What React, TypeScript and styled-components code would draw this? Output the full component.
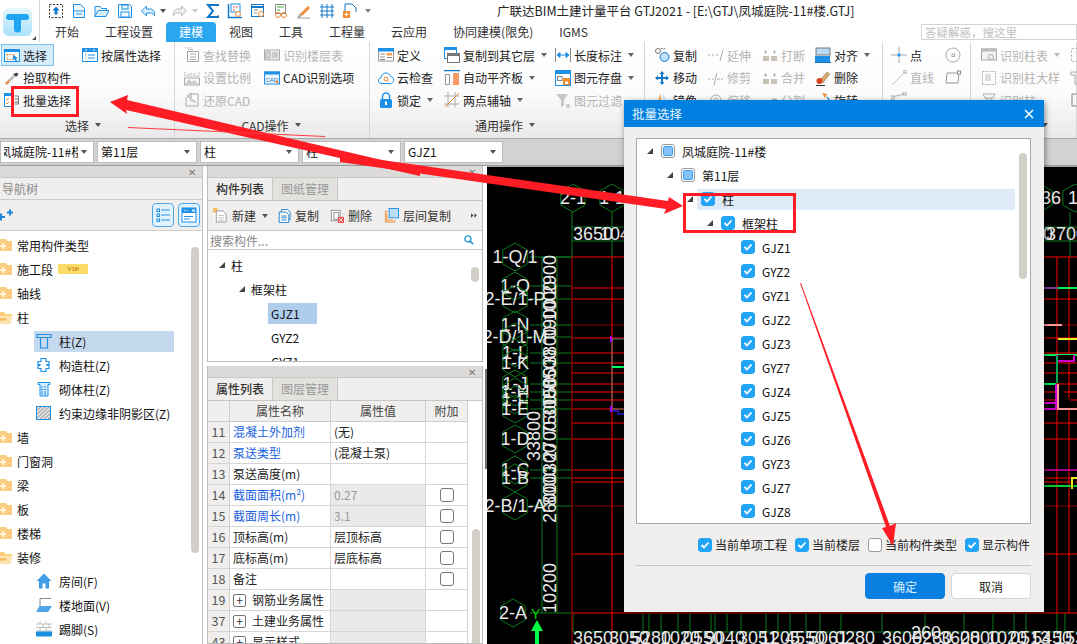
import React from 'react';
import styled, { createGlobalStyle } from 'styled-components';

const GlobalStyle = createGlobalStyle`
  html, body { margin: 0; padding: 0; background: #fff; }
  body { font-family: "Noto Sans CJK SC", "Liberation Sans", sans-serif; font-size: 12px; color: #111; }
  * { box-sizing: border-box; }
`;

const B = '#1e90e6', O = '#f28a2e', G = '#a9a9a9';

const icons: Record<string, React.ReactNode> = {
  upload: <><rect x="1.5" y="1.5" width="13" height="13" stroke="#333" strokeDasharray="2 1.5" /><path d="M8 3.5l3.5 4H9.5v4h-3v-4H4.5z" fill="#1478c8" /></>,
  doc: <><path d="M2.5 1.5h7l4 4v9h-11z" fill="#eef7fe" stroke={B} /><path d="M2.5 8h11M5 11h6" stroke={B} /></>,
  folder: <><path d="M1 13.5V3.5h5l1.5 2h5v2" stroke={B} fill="#eef7fe" /><path d="M1 13.5l3-6h11l-3 6z" fill="#d8eefc" stroke={B} /></>,
  save: <><path d="M1.5 1.5h11l2 2v11h-13z" fill="#eef7fe" stroke={B} /><rect x="5" y="2" width="6" height="4" stroke={B} /><rect x="4" y="9" width="8" height="5" fill="#fff" stroke={B} /></>,
  undo: <path d="M6.5 3L1.5 8l5 5v-3h4c2 0 3.500 1 4 3 .5-4-1-7-4-7h-4z" fill="#d8eefc" stroke={B} />,
  redo: <path d="M9.500 3l5 5-5 5v-3h-4c-2 0-3.500 1-4 3-.5-4 1-7 4-7h4z" fill="#eee" stroke="#bbb" />,
  sigma: <path d="M13 3V2H3l5 6-5 6h10v-1.500" stroke="#1478c8" strokeWidth="2" />,
  calc1: <><path d="M1.500 1v13.500H15" stroke="#1478c8" strokeWidth="1.500" /><rect x="4" y="1" width="9" height="8" fill="#fff" stroke={B} /><path d="M6 4h2M9 4h2M6 7h2" stroke="#e55" /><circle cx="11" cy="11" r="2.500" stroke={O} fill="#fff" /></>,
  calc2: <><rect x="1.500" y="1.500" width="12" height="12" fill="#fff" stroke="#1478c8" /><path d="M1.500 4h12" stroke="#1478c8" strokeWidth="2" /><path d="M4 7h4M4 10h3" stroke="#888" /><circle cx="11" cy="11" r="2.500" stroke={O} fill="#fff" /></>,
  calc3: <><rect x="2.500" y="1.500" width="10" height="9" fill="#fff" stroke="#888" /><path d="M4 4h7M4 7h3" stroke="#4a4" /><circle cx="5" cy="12" r="2.500" stroke={O} /><circle cx="11" cy="12" r="2.500" stroke={O} /></>,
  pen: <><path d="M4 11l8-8 2 2-8 8z" fill={O} /><path d="M4 11l-2 3 3-1zM1 15h13" stroke="#999" /></>,
  grid: <path d="M1 4h14M1 8h14M1 12h14M3 1v14M8 1v14M13 1v14" stroke="#1478c8" />,
  pagePlus: <><path d="M3 1h7l4 4v4M3 1v8" stroke="#1478c8" fill="none" /><rect x="1" y="8" width="7" height="7" fill={O} /><path d="M4.500 9.500v4M2.500 11.500h4" stroke="#fff" /></>,
  select: <><rect x=".5" y="2.500" width="15" height="12" fill="#f5fbff" stroke={B} /><rect x="0" y="2" width="16" height="3" fill={B} /><rect x="3" y="7.500" width="7" height="5" stroke={O} strokeDasharray="1.500 1" /><path d="M9 8l5 3-2 .5 1 2.500-1.500.5-1-2.500-1.500 1z" fill={B} /></>,
  attr: <><rect x=".5" y="1.500" width="15" height="13" fill="#fff" stroke={B} /><rect x="0" y="1" width="16" height="4" fill={B} /><path d="M3 8h1M6 8h7M3 11h1M6 11h7" stroke={B} /><path d="M3 3h2M11 3h2" stroke="#fff" /></>,
  pick: <><path d="M2 14l8-8" stroke="#bbb" strokeWidth="2.500" /><path d="M2 14l3-3" stroke={O} strokeWidth="2" /><path d="M9 4l3 3 2-2c1-1-1-3-2-2z" fill="#444" /></>,
  batch: <><rect x=".5" y="1.500" width="7" height="13" fill="#fff" stroke={B} /><rect x="0" y="1" width="8" height="3" fill={B} /><path d="M2 7l1 1 2-2M2 11l1 1 2-2" stroke={O} /><path d="M10.500 4h4v8h-4M10.500 7h4M10.500 10h4" stroke="#777" /></>,
  find: <><rect x="3.500" y="4.500" width="11" height="10" stroke={G} /><path d="M6 7h6M6 10h6M6 12.500h6" stroke={G} /><path d="M1 1h7v3M4 2.500h6" stroke={G} strokeDasharray="1 1" /></>,
  floorTable: <><rect x=".5" y="3" width="15" height="10" fill="#eee" stroke={G} /><rect x="2" y="5" width="4" height="6" fill="#ddd" stroke={G} /><path d="M8 6h6M8 8h6M8 10h6" stroke={G} /></>,
  scale: <><path d="M1 14l4-5 3 3 2-2 5 4z" fill="#ccc" /><path d="M1 2v4h14V2M4 4h8" stroke={G} strokeDasharray="1.500 1" /><rect x=".5" y="8" width="15" height="7" stroke={G} /></>,
  cadOpt: <><rect x=".5" y="2" width="15" height="12" fill="#eaf5fd" stroke={B} /><rect x="0" y="1.500" width="16" height="3" fill={B} /><text x="1.500" y="12" fontSize="6" fontFamily="Liberation Sans" fill="#1478c8">CAD</text><path d="M12 10l3 2-3 2z" fill={O} /></>,
  restore: <><path d="M2 5v9h12V2H6" stroke={G} /><path d="M7 1L3 4l4 3zM6 9c2-2 5-1 5 2" stroke={G} fill="#ddd" /></>,
  define: <><rect x=".5" y="1.500" width="15" height="12.500" fill="#fff" stroke="#999" /><rect x="0" y="1" width="16" height="3.500" fill={B} /><rect x="8.500" y="6" width="5.500" height="2.500" fill="#f5a04a" /><path d="M2 7h5M2 10h5M9 10.500h5M2 12.500h5" stroke="#888" /></>,
  cloud: <><path d="M4 13.500C1 13.500 0 11.500.5 10 1 8.500 2 8 3 8c0-3 2-5 5-5 2.500 0 4 1.500 4.500 3.500 2 0 3.500 1.500 3 4-.3 2-1.500 3-3 3z" fill="#fff" stroke={B} /><circle cx="8" cy="9" r="2" stroke={O} /><path d="M9.500 10.500l1.500 1.500" stroke={O} /></>,
  lock: <><rect x="2" y="7" width="12" height="9" rx="1.500" fill={B} /><path d="M4.500 7V4.500a3.500 3.500 0 017 0V7" stroke={B} strokeWidth="1.500" /><rect x="7" y="9.500" width="2" height="3.500" fill="#fff" /></>,
  copyFloor: <><rect x=".5" y=".5" width="12" height="11" fill="#fff" stroke={B} /><rect x="0" y="0" width="13" height="3" fill={B} /><rect x="3.500" y="6.500" width="12" height="9" fill="#fff" stroke="#777" /><rect x="3" y="6" width="13" height="3" fill="#777" /></>,
  autoAlign: <><path d="M0 .5h16" stroke="#1478c8" strokeWidth="1.500" /><rect x="1.500" y="4.500" width="4" height="10" fill="#fff" stroke="#999" /><rect x="9" y="3" width="6" height="12" fill="#f79a66" /></>,
  twoPoint: <><path d="M0 4h15M0 12h15M4 0v15M11 0v15" stroke="#aaa" /><path d="M1 15L15 1" stroke={O} /></>,
  length: <><path d="M.5 1v14M15.500 1v14" stroke="#888" /><path d="M2 8h12M2 8l3-2.500v5zM14 8l-3-2.500v5z" stroke={B} fill={B} /></>,
  saveEl: <><rect x=".5" y=".5" width="15" height="15" fill="#fff" stroke={B} /><rect x="0" y="0" width="16" height="4" fill={B} /><rect x="2.500" y="6.500" width="4.500" height="4" stroke="#888" /><rect x="8" y="8" width="7" height="7" fill={O} /><rect x="10" y="11.500" width="3" height="2.500" fill="#fff" /></>,
  filter: <><path d="M1 2h12L9 8v6l-3 1V8z" fill="#c9c9c9" /><path d="M11 13h4M11 15h4" stroke={G} /></>,
  copy: <><circle cx="4" cy="4" r="2.500" stroke="#777" /><path d="M7 1.500h5" stroke="#777" strokeDasharray="1.500 1" /><circle cx="10.500" cy="10" r="4.500" fill="#bfe0f8" stroke="#1478c8" /></>,
  extend: <path d="M0 8h2M4 8h2M8 8h2M12 14l3-11" stroke={G} />,
  breakI: <><rect x="1" y="9" width="6" height="5" fill="#c9c3b6" /><rect x="9" y="9" width="6" height="5" fill="#c9c3b6" /><path d="M2 5h3M3.500 3.500v3M11 5h3M12.500 3.500v3" stroke={G} /></>,
  alignI: <><rect x="1" y="1" width="14" height="7" fill="#b8dcf8" stroke="#777" /><rect x="0" y="9" width="15" height="6" fill={B} /><path d="M0 15.500h16" stroke="#1478c8" /></>,
  move: <path d="M8 1l2.500 3H9v3h3V5.500L15 8l-3 2.500V9H9v3h1.500L8 15l-2.500-3H7V9H4v1.500L1 8l3-2.500V7h3V4H5.500z" fill="#1478c8" />,
  trim: <path d="M0 9h2M4 9h2M9 9h3M13 9h2M6 15L9 3" stroke={G} />,
  del: <><path d="M5 10l7-8 3 2-7 9z" fill="#d9a868" stroke="#876" strokeWidth=".5" /><circle cx="4.500" cy="11" r="3" fill="#d8431a" /><path d="M1 15.500h9" stroke="#333" /></>,
  mirror: <><path d="M7 1L2 14h5z" fill="#f5a04a" /><path d="M9 1l5 13H9z" fill="#c6e2f8" /></>,
  offset: <path d="M3 15V8a5 5 0 0110 0v7M6 15V8a2 2 0 014 0v7" stroke={G} />,
  split: <path d="M1 14l11-7 3 1M1 14h14" stroke={G} strokeWidth="1.500" />,
  rotate: <><path d="M3 9a5.500 5.500 0 109-4" stroke={B} strokeWidth="1.500" /><path d="M7 1l5 1-2 4z" fill={O} /></>,
  point: <><path d="M0 8h6M10 8h6M8 0v6M8 10v6" stroke="#aaa" /><rect x="6.500" y="6.500" width="3" height="3" fill={B} /></>,
  circleI: <><circle cx="8" cy="8" r="7" stroke="#a8a8a8" /><rect x="7" y="7" width="2.500" height="2.500" stroke="#a8a8a8" /></>,
  lineI: <><path d="M1 15L15 1" stroke="#c8c8c8" /><rect x="13" y="0" width="3" height="3" fill="#fff" stroke="#aaa" /></>,
  rectI: <><path d="M2 3h12l-1 10H1z" stroke="#999" /><rect x="12.500" y="1" width="3" height="3" fill="#fff" stroke="#888" /></>,
  polyI: <><path d="M1 13V5l12-3" stroke={G} /><rect x="12" y="0" width="3" height="3" fill="#fff" stroke={G} /><rect x="0" y="4" width="3" height="3" fill="#fff" stroke={G} /></>,
  colTable: <><rect x=".5" y="2" width="15" height="11" fill="#f3f3f3" stroke={G} /><rect x="0" y="1.500" width="16" height="3" fill="#bbb" /><circle cx="10" cy="10" r="2.500" stroke={G} /></>,
  colBig: <><rect x="1.500" y="1.500" width="13" height="13" stroke={G} strokeDasharray="1.500 1" /><rect x="4" y="4" width="6" height="7" fill="#ddd" /></>,
  colRec: <><path d="M2 2h12l-2 4H4zM6 6v7M10 6v7" stroke={G} /><circle cx="11" cy="12" r="2" stroke={G} /></>,
  dots: <rect x="1.500" y="1.500" width="13" height="13" stroke={G} strokeDasharray="2 2" />,
  tee: <path d="M1 2h14v3h-4v9H5V5H1z" stroke={G} />,
  bracket: <path d="M2 2v12M2 2h10M2 14h10" stroke={G} strokeWidth="1.500" />,
  list: <><rect x="2" y="2" width="2.500" height="2.500" stroke={B} /><rect x="2" y="7" width="2.500" height="2.500" stroke={B} /><rect x="2" y="12" width="2.500" height="2.500" stroke={B} /><path d="M6 3h9M6 8h9M6 13h9" stroke={B} /></>,
  panel: <><rect x="1" y="1" width="14" height="14" fill="#fff" stroke={B} /><rect x="1" y="1" width="14" height="5" fill={B} /><path d="M3 9.500h9M3 12h6" stroke={B} /><path d="M3 3.500h1M5.500 3.500h1M11 3h3l-1.500 2z" stroke="#fff" /></>,
  column: <path d="M1 1.500h14v3h-3.500V15h-7V4.500H1zM4.500 4.500h7" stroke={B} fill="none" strokeWidth="1.200" />,
  construct: <path d="M5 1.500h5v3h3v3h-2v1h2v3h-3v3H5v-3H2v-3h2v-1H2v-3h3z" stroke={B} fill="#fff" strokeWidth="1.200" />,
  masonry: <><path d="M2 1.500h12v2h-2V15H4V3.500H2z" stroke={B} fill="#d7ebfb" /><path d="M5 6h6M5 8.500h6M5 11h6M5 13h6" stroke={B} strokeDasharray="2 1" /></>,
  hatch: <><rect x=".5" y="1.500" width="14" height="13" fill="#ddd" stroke={B} /><path d="M1 5l4-3M1 9l8-7M1 13l12-11M4 14l10-9M8 14l6-5M12 14l2-2" stroke="#999" /></>,
  house: <path d="M8 .5L.5 8H3v7.500h3.500v-5h3v5H13V8h2.500z" fill="#3f9ee8" />,
  floor: <><path d="M4 9V1.500h11" stroke="#888" /><path d="M0 15l3.500-6H16l-4 6z" fill="#4ea4e6" /></>,
  skirt: <><path d="M0 3h16M0 6.500h16M0 10h16M4 0v3M10 0v3M7 3v3.500M13 3v3.500M4 6.500V10M10 6.500V10" stroke="#bbb" strokeWidth="1" /><rect x="0" y="10.500" width="16" height="5" fill="#1e8fe0" /></>,
  add: <><rect x="1" y="1.500" width="9" height="11" fill="#fbfbfb" /><rect x="0" y="0" width="5" height="5" fill="#f9c06a" /><path d="M3.500 3h7l3.500 3.500V15h-10.500z" fill="#fff" stroke="#999" /><path d="M5.500 8h6M5.500 10.500h6M5.500 13h6" stroke="#bbb" /></>,
  copyDoc: <><path d="M5 .5h7l3 3V12H5z" fill="#fff" stroke="#1478c8" /><path d="M2.500 3.500h8l3 3v9h-11z" fill="#fff" stroke="#1478c8" /><path d="M5 8h6M5 10h6M5 12.500h6" stroke="#1478c8" /></>,
  delDoc: <><rect x="1.500" y="1.500" width="10" height="12" fill="#fff" stroke="#888" /><rect x="4.500" y="4" width="5" height="8" fill="#fff" stroke="#888" /><rect x="9" y="9" width="7" height="7" fill="#ef5350" /><path d="M10.500 10.500l4 4M14.500 10.500l-4 4" stroke="#fff" /></>,
  layerCopy: <><path d="M4.500 3.500H1.500V15h10v-2M3 5.500V13h7" stroke={O} /><rect x="5.500" y=".5" width="10" height="10" fill="#bcdcf7" stroke={B} /></>,
  search: <><circle cx="6.500" cy="6.500" r="4" stroke="#1e98c8" strokeWidth="1.800" /><path d="M9.500 9.500l4 4" stroke="#1e98c8" strokeWidth="2" /></>,
  fw: <path d="M2 4l4 4-4 4zM8 4l4 4-4 4z" fill="#333" />,
};

const Svg = ({ n, w = 16, h = 16 }: { n: string; w?: number; h?: number }) => (
  <svg width={w} height={h} viewBox="0 0 16 16" fill="none" style={{ flex: 'none' }}>{icons[n]}</svg>
);

const Frame = styled.div`
  position: relative; width: 1077px; height: 644px; overflow: hidden; background: #f0efee;
  display: flex; flex-direction: column;
`;
/* ---------- header ---------- */
const Header = styled.header`display: flex; height: 42px; background: #fff;`;
const LogoCell = styled.div`
  position: relative; width: 40px; flex: none; border-right: 1px solid #d4d4d4; padding: 8px 0 0 3px;
  &::after { content: ''; position: absolute; right: 3px; bottom: 2px; border-left: 4px solid transparent; border-bottom: 4px solid #555; }
`;
const HeaderMain = styled.div`flex: 1; min-width: 0; display: flex; flex-direction: column;`;
const QuickBar = styled.div`height: 22px; display: flex; align-items: center; padding-left: 8px;`;
const QuickSlot = styled.span<{ $w: number; $gap?: number }>`
  flex: none; width: ${p => p.$w}px; margin-right: ${p => p.$gap ?? 7}px; display: flex; align-items: center; gap: 4px;
`;
const MiniCaret = styled.span<{ $c?: string }>`
  flex: none; width: 0; height: 0; border-left: 3.500px solid transparent; border-right: 3.500px solid transparent;
  border-top: 4px solid ${p => p.$c ?? '#555'};
`;
const WinTitle = styled.div`margin-left: 126px; margin-top: -2px; font-size: 12.500px; white-space: nowrap; color: #222;`;
const TabRow = styled.nav`height: 20px; display: flex; align-items: stretch;`;
const Tab = styled.div<{ $on?: boolean }>`
  padding: 0 13px; white-space: nowrap; line-height: 20px; font-size: 12px; border-radius: 4px 4px 0 0;
  color: ${p => (p.$on ? '#fff' : '#333')}; background: ${p => (p.$on ? '#2aa6ef' : 'transparent')};
  &:first-child { margin-left: 2px; }
`;
const AskBox = styled.div`
  margin-left: auto; width: 156px; height: 16px; border: 1px solid #d4d4d4; color: #c0c0c0; font-size: 11.500px; line-height: 14px; padding-left: 3px; align-self: center;
`;
/* ---------- ribbon ---------- */
const Ribbon = styled.section`
  height: 97px; flex: none; display: flex; overflow: hidden; border-bottom: 1px solid #aaa;
  background: linear-gradient(#fff 0%, #fbfbfb 55%, #e9e9e9 100%);
`;
const RGroup = styled.div<{ $w: number; $pl: number }>`
  width: ${p => p.$w}px; flex: none; padding-left: ${p => p.$pl}px; padding-top: 2px; display: flex; flex-direction: column;
  border-right: 1px solid #d6d6d6;
`;
const RGrid = styled.div<{ $cols: string }>`
  display: grid; grid-template-columns: ${p => p.$cols}; grid-auto-rows: 22.500px; align-items: center;
`;
const RLabel = styled.div<{ $pl: number; $shift: number }>`
  margin: auto 0 0 -${p => p.$pl}px; padding-right: ${p => p.$shift}px; height: 26px; display: flex; align-items: center; justify-content: center; gap: 6px; color: #333; font-size: 12px;
`;
const Tool = styled.div<{ $off?: boolean; $on?: boolean }>`
  display: inline-flex; align-items: center; gap: 3px; white-space: nowrap; font-size: 12px; height: 20px;
  justify-self: start;
  color: ${p => (p.$off ? '#b4b4b4' : '#222')};
  ${p => p.$on ? 'background:#d3ecfb; outline:1px solid #7cc0ee; padding-right:6px; margin-left:-2px; padding-left:2px;' : ''}
`;
/* ---------- combo row ---------- */
const ComboRow = styled.div`height: 27px; flex: none; display: flex; align-items: center; gap: 3px; background: #d2d2d2; border-bottom: 1px solid #999;`;
const Combo = styled.div<{ $w: number }>`
  width: ${p => p.$w}px; height: 22px; flex: none; background: #fff; border: 1px solid #bdbdbd; font-size: 12px; line-height: 20px;
  display: flex; align-items: center; justify-content: space-between; overflow: hidden; white-space: nowrap;
  padding: 0 6px 0 3px;
`;
const ClipText = styled.span<{ $indent?: number }>`flex: 1; min-width: 0; overflow: hidden; margin-right: 3px; text-indent: ${p => p.$indent ?? 0}px;`;
/* ---------- body ---------- */
const Work = styled.main`flex: 1; min-height: 0; display: flex; background: #fff;`;
const PanelStrip = styled.div`
  height: 12px; flex: none; background: #dcdbda; display: flex; align-items: center; justify-content: flex-end;
  padding-right: 6px; font-size: 10px; line-height: 1; color: #777; border-bottom: 1px solid #c8c8c8;
`;
const Nav = styled.aside`width: 203px; flex: none; display: flex; flex-direction: column; border-right: 1px solid #c4c4c4; overflow: hidden; background: #fff;`;
const NavTitle = styled.div`height: 22px; flex: none; background: #f0efee; border-bottom: 1px solid #ccc; color: #8a8a8a; padding-left: 2px; line-height: 21px;`;
const NavTools = styled.div`
  height: 31px; flex: none; background: #f0efee; border-bottom: 1px solid #ccc; display: flex; align-items: center; padding-right: 2px; gap: 4px;
`;
const NavBtn = styled.span`
  width: 22px; height: 24px; border: 1px solid #4aa8ea; border-radius: 4px; background: #e2f2fd; display: flex; align-items: center; justify-content: center;
`;
const NavTree = styled.div`position: relative; flex: 1; min-height: 0; padding-top: 2px;`;
const NavRow = styled.div`height: 24px; display: flex; align-items: center; gap: 5px; white-space: nowrap;`;
const NavChild = styled.div`height: 24px; display: flex; align-items: center; white-space: nowrap; padding-left: 34px;`;
const NavItem = styled.span<{ $on?: boolean }>`
  width: 140px; height: 21px; padding-left: 2px; display: flex; align-items: center; gap: 7px;
  background: ${p => (p.$on ? '#c4d9ee' : 'transparent')};
`;
const Vip = styled.span`
  width: 30px; height: 10px; background: #fbdb68; color: #c98a1a; font: 700 7px/10px "Liberation Serif", serif; text-align: center;
`;
const Thumb = styled.div<{ $l: number; $t: number; $h: number }>`
  position: absolute; left: ${p => p.$l}px; top: ${p => p.$t}px; width: 8px; height: ${p => p.$h}px; background: #d2cfc9; border-radius: 4px;
`;
const Mid = styled.div`width: 276px; margin-left: 4px; flex: none; display: flex; flex-direction: column; gap: 4px;`;
const Panel = styled.section<{ $h?: number }>`
  ${p => (p.$h ? `height:${p.$h}px; flex:none;` : 'flex:1; min-height:0;')}
  display: flex; flex-direction: column; overflow: hidden; border: 1px solid #bcbcbc; border-top: 0; background: #fff; position: relative;
`;
const TabsBar = styled.div`height: 23px; flex: none; display: flex; background: #f0efee; border-bottom: 1px solid #c8c8c8;`;
const PTab = styled.div<{ $on?: boolean }>`
  width: 65px; text-align: center; line-height: 22px; font-size: 12px;
  color: ${p => (p.$on ? '#333' : '#999')}; font-weight: ${p => (p.$on ? 500 : 400)};
  background: ${p => (p.$on ? '#f0efee' : '#e2e1de')}; border-right: 1px solid #c8c8c8;
`;
const PTools = styled.div`height: 30px; flex: none; display: flex; align-items: center; padding-left: 5px; background: #f0efee; border-bottom: 1px solid #c8c8c8;`;
const PTool = styled.span<{ $m: number; $ml?: number }>`display: inline-flex; align-items: center; gap: 4px; margin: 0 ${p => p.$m}px 0 ${p => p.$ml ?? 0}px; white-space: nowrap; color: #333;`;
const SearchRow = styled.div`height: 19px; flex: none; display: flex; align-items: center; justify-content: space-between; padding: 0 7px 0 2px; color: #888; border-bottom: 1px solid #c8c8c8;`;
const CompTree = styled.div`position: relative; flex: 1; min-height: 0; padding-top: 3px; overflow: hidden;`;
const TreeRow = styled.div<{ $pad: number }>`height: 24px; display: flex; align-items: center; gap: 6px; padding-left: ${p => p.$pad}px; white-space: nowrap;`;
const Tri = styled.span`flex: none; width: 6px; height: 6px; background: #444; clip-path: polygon(100% 0, 100% 100%, 0 100%);`;
const Picked = styled.span`background: #aecdec; padding: 0 3px; width: 49px; height: 21px; line-height: 21px; margin-left: -3px;`;
/* table */
const PropHead = styled.div`display: grid; grid-template-columns: 22px 101px 95px 42px; width: 260px; height: 21px; flex: none; background: #f0efee; border-bottom: 1px solid #ccc;`;
const HeadCell = styled.div`text-align: center; line-height: 20px; color: #444; border-right: 1px solid #ccc;`;
const PropRow = styled.div`display: grid; grid-template-columns: 22px 101px 95px 42px; width: 260px; height: 21px; flex: none; border-bottom: 1px solid #d6d6d6;`;
const NumCell = styled.div`background: #f0efee; border-right: 1px solid #d0d0d0; text-align: center; line-height: 20px; color: #555; font-size: 12.500px;`;
const NameCell = styled.div<{ $blue?: boolean }>`
  padding-left: 3px; line-height: 20px; border-right: 1px solid #d6d6d6; white-space: nowrap; overflow: hidden;
  color: ${p => (p.$blue ? '#1a62e0' : '#222')}; display: flex; align-items: center; gap: 6px;
`;
const ValCell = styled.div<{ $grey?: boolean }>`
  padding-left: 3px; line-height: 20px; border-right: 1px solid #d6d6d6; white-space: nowrap;
  background: ${p => (p.$grey ? '#ebeae9' : '#fff')}; color: ${p => (p.$grey ? '#999' : '#222')};
`;
const AddCell = styled.div`border-right: 1px solid #d6d6d6; display: flex; align-items: center; justify-content: center;`;
const TableBox = styled.span`width: 14px; height: 14px; border: 1px solid #777; border-radius: 3px; background: #fff;`;
const Expand = styled.span`
  flex: none; width: 13px; height: 13px; border: 1px solid #777; border-radius: 2px; line-height: 10px; text-align: center; font-size: 12px; color: #333;
`;
const Split = styled.div`
  width: 4px; flex: none; background: #fff; display: flex; align-items: center; justify-content: flex-end; padding-top: 28px;
`;
const Handle = styled.div`width: 2px; height: 100px; background: #6f7478;`;
const Cad = styled.div`flex: 1; min-width: 0; background: #000; overflow: hidden; border-top: 1px solid #aaa; svg { display: block; }`;
/* ---------- dialog ---------- */
const Dialog = styled.div`
  position: absolute; left: 624px; top: 100px; width: 420px; height: 512px; background: #f0efee;
  box-shadow: 1px 2px 6px rgba(0,0,0,.45); display: flex; flex-direction: column; z-index: 2;
`;
const DlgHead = styled.div`
  height: 27px; flex: none; background: #0080e0; color: #e8f4ff; display: flex; align-items: center; justify-content: space-between;
  padding: 0 9px 0 8px; font-size: 12.500px;
`;
const DlgTree = styled.div`
  position: relative; margin: 11px 13px 0 12px; height: 386px; flex: none; background: #fff; border: 1px solid #aaa; overflow: hidden;
`;
const DRow = styled.div<{ $lv: number }>`
  height: 24px; display: flex; align-items: center; padding-left: ${p => 10 + p.$lv * 20}px; white-space: nowrap;
`;
const DTri = styled(Tri)<{ $hide?: boolean }>`margin-right: 8px; visibility: ${p => (p.$hide ? 'hidden' : 'visible')};`;
const DLabel = styled.div<{ $hl?: boolean }>`
  display: flex; align-items: center; gap: 7px; height: 21px;
  ${p => (p.$hl ? 'background:#deeaf7; flex:1; margin:0 15px 0 -4px; padding-left:4px;' : '')}
`;
const Box = styled.span<{ $s: 'on' | 'off' | 'mix' }>`
  flex: none; width: 14px; height: 14px; border-radius: 3px; display: flex; align-items: center; justify-content: center;
  background: ${p => (p.$s === 'on' ? '#22a5f7' : '#fff')};
  border: 1px solid ${p => (p.$s === 'on' ? '#22a5f7' : '#999')};
`;
const MixDot = styled.span`width: 10px; height: 10px; border-radius: 2px; background: #84c4fb; border: 1px solid #3a9df0;`;
const Opts = styled.div`height: 41px; flex: none; display: flex; align-items: center; justify-content: flex-end; padding-right: 14px; gap: 8px;`;
const Opt = styled.label`display: inline-flex; align-items: center; gap: 3px; white-space: nowrap; color: #222;`;
const Rule = styled.div`height: 1px; flex: none; margin: 0 13px 0 12px; background: #c8c6c4;`;
const Btns = styled.div`display: flex; justify-content: flex-end; gap: 6px; padding: 7px 13px 0 0;`;
const Btn = styled.button<{ $pri?: boolean }>`
  width: 80px; height: 26px; border-radius: 4px; font: 12px "Noto Sans CJK SC", sans-serif;
  background: ${p => (p.$pri ? '#0a7fe2' : '#fff')}; color: ${p => (p.$pri ? '#dcefff' : '#222')};
  border: 1px solid ${p => (p.$pri ? '#0a7fe2' : '#d4d4d4')};
`;
const Overlay = styled.svg`position: absolute; left: 0; top: 0; z-index: 3; pointer-events: none;`;

/* ---------- data ---------- */
type T = { i?: string; t?: string; off?: boolean; c?: boolean; on?: boolean };
const groups: { w: number; pl: number; shift: number; cols: string; label: string; items: T[] }[] = [
  { w: 175, pl: 4, shift: 8, cols: '78px 90px', label: '选择', items: [
    { i: 'select', t: '选择', on: true }, { i: 'attr', t: '按属性选择' }, { i: 'pick', t: '拾取构件' }, {}, { i: 'batch', t: '批量选择' }] },
  { w: 195, pl: 9, shift: 2, cols: '80px 100px', label: 'CAD操作', items: [
    { i: 'find', t: '查找替换', off: true }, { i: 'floorTable', t: '识别楼层表', off: true }, { i: 'scale', t: '设置比例', off: true }, { i: 'cadOpt', t: 'CAD识别选项' }, { i: 'restore', t: '还原CAD', off: true }] },
  { w: 275, pl: 8, shift: 4, cols: '66px 111px 90px', label: '通用操作', items: [
    { i: 'define', t: '定义' }, { i: 'copyFloor', t: '复制到其它层', c: true }, { i: 'length', t: '长度标注', c: true },
    { i: 'cloud', t: '云检查' }, { i: 'autoAlign', t: '自动平齐板', c: true }, { i: 'saveEl', t: '图元存盘', c: true },
    { i: 'lock', t: '锁定', c: true }, { i: 'twoPoint', t: '两点辅轴', c: true }, { i: 'filter', t: '图元过滤', off: true }] },
  { w: 238, pl: 9, shift: 0, cols: '54px 54px 53px 64px', label: '修改', items: [
    { i: 'copy', t: '复制' }, { i: 'extend', t: '延伸', off: true }, { i: 'breakI', t: '打断', off: true }, { i: 'alignI', t: '对齐', c: true },
    { i: 'move', t: '移动' }, { i: 'trim', t: '修剪', off: true }, { i: 'breakI', t: '合并', off: true }, { i: 'del', t: '删除' },
    { i: 'mirror', t: '镜像' }, { i: 'offset', t: '偏移', off: true }, { i: 'split', t: '分割', off: true }, { i: 'rotate', t: '旋转' }] },
  { w: 88, pl: 8, shift: 0, cols: '54px 30px', label: '绘图', items: [
    { i: 'point', t: '点' }, { i: 'circleI' }, { i: 'lineI', t: '直线', off: true }, { i: 'rectI' }, { i: 'polyI' }] },
  { w: 106, pl: 10, shift: 0, cols: '89px 20px', label: '识别柱', items: [
    { i: 'colTable', t: '识别柱表', off: true, c: true }, { i: 'dots' }, { i: 'colBig', t: '识别柱大样', off: true }, { i: 'tee' }, { i: 'colRec', t: '识别柱', off: true }, { i: 'bracket' }] },
];

const quick: [string, number, boolean?][] = [
  ['upload', 16], ['doc', 16], ['folder', 16], ['save', 16], ['undo', 26, true], ['redo', 25, true], ['sigma', 15],
  ['calc1', 16], ['calc2', 16], ['calc3', 16], ['pen', 16], ['grid', 16], ['pagePlus', 16],
];
const tabs = ['开始', '工程设置', '建模', '视图', '工具', '工程量', '云应用', '协同建模(限免)', 'IGMS'];

const navData: { t: string; open?: boolean; vip?: boolean; kids?: [string, string, boolean?][] }[] = [
  { t: '常用构件类型' }, { t: '施工段', vip: true }, { t: '轴线' },
  { t: '柱', open: true, kids: [['column', '柱(Z)', true], ['construct', '构造柱(Z)'], ['masonry', '砌体柱(Z)'], ['hatch', '约束边缘非阴影区(Z)']] },
  { t: '墙' }, { t: '门窗洞' }, { t: '梁' }, { t: '板' }, { t: '楼梯' },
  { t: '装修', open: true, kids: [['house', '房间(F)'], ['floor', '楼地面(V)'], ['skirt', '踢脚(S)'], ['house', '墙裙(U)']] },
];

const props: { n: number; name: string; blue?: boolean; val?: string; grey?: boolean; box?: boolean; exp?: boolean }[] = [
  { n: 11, name: '混凝土外加剂', blue: true, val: '(无)' },
  { n: 12, name: '泵送类型', blue: true, val: '(混凝土泵)' },
  { n: 13, name: '泵送高度(m)' },
  { n: 14, name: '截面面积(m²)', blue: true, val: '0.27', grey: true, box: true },
  { n: 15, name: '截面周长(m)', blue: true, val: '3.1', grey: true, box: true },
  { n: 16, name: '顶标高(m)', val: '层顶标高', box: true },
  { n: 17, name: '底标高(m)', val: '层底标高', box: true },
  { n: 18, name: '备注', box: true },
  { n: 19, name: '钢筋业务属性', exp: true, grey: true },
  { n: 37, name: '土建业务属性', exp: true, grey: true },
  { n: 43, name: '显示样式', exp: true, grey: true },
];

const members = ['GJZ1', 'GYZ2', 'GYZ1', 'GJZ2', 'GJZ3', 'GYZ7', 'GJZ4', 'GJZ5', 'GJZ6', 'GYZ3', 'GJZ7', 'GJZ8'];

const Tick = () => <svg width="10" height="10" viewBox="0 0 10 10" fill="none"><path d="M1.500 5l2.500 2.500 4.500-5" stroke="#fff" strokeWidth="1.800" /></svg>;
const Mark = ({ s }: { s: 'on' | 'off' | 'mix' }) => <Box $s={s}>{s === 'on' ? <Tick /> : s === 'mix' ? <MixDot /> : null}</Box>;

/* ---------- CAD drawing ---------- */
const hLines: [number, string][] = [[256, '#f00'], [287, '#f00'], [298, '#f00'], [324, '#8b0000'], [337, '#f00'], [352, '#f00'], [362, '#f00'], [372, '#f00'], [383, '#f00'], [391, '#f00'], [399, '#f00'], [408, '#f00'], [422, '#f00'], [438, '#f00'], [469, '#f00'], [477, '#f00'], [481, '#f00'], [505, '#8b0000'], [553, '#f00'], [612, '#f00']];
const leftAxes: [string, number, number][] = [['1-Q/1', 256, 515], ['1-Q', 285, 515], ['2-E/1-P', 298, 515], ['1-N', 324, 515], ['2-D/1-M', 336, 515], ['1-L', 352, 515], ['1-K', 362, 515], ['1-J', 383, 515], ['1-H', 391, 515], ['1-F', 399, 515], ['1-E', 408, 515], ['1-D', 438, 515], ['1-C', 469, 515], ['1-B', 477, 515], ['2-B/1-A', 505, 515], ['2-A', 612, 513]];
const vDims: [number, string][] = [[274, '2900'], [300, '1000'], [318, '0900'], [345, '3800'], [368, '8500'], [386, '1500'], [398, '3000'], [414, '7500'], [440, '2700'], [462, '0300'], [485, '8000'], [502, '2600']];
const ticks = [228, 415, 430, 463, 508, 540, 595, 605, 637, 675, 742, 772, 805, 847, 885, 940, 1050, 1165, 1268, 1345, 1400, 1432, 1515, 1535].map(v => Math.round(487 + v / 2.657));
const btm: [number, string][] = [[573, '3650'], [609, '3050'], [631, '5280'], [660, '1020'], [683, '0550'], [705, '9040'], [738, '3051'], [760, '1205'], [785, '4550'], [808, '5061'], [835, '0280'], [882, '3600'], [912, '5280'], [940, '3600'], [960, '2800'], [987, '1020'], [1010, '0513'], [1032, '5450'], [1055, '1530']];
const Wt = styled.text`fill: #e8e8e8; font-family: "Liberation Sans", sans-serif; font-size: 18px;`;
const Hex = ({ x, y, r = 14 }: { x: number; y: number; r?: number }) => (
  <polygon points={`${x},${y - r} ${x + r * .87},${y - r / 2} ${x + r * .87},${y + r / 2} ${x},${y + r} ${x - r * .87},${y + r / 2} ${x - r * .87},${y - r / 2}`} fill="none" stroke="#0a7a1e" />
);
const CadDrawing = () => (
  <svg width="590" height="478" viewBox="487 166 590 478">
    <path d="M542 256V612M557 256V612M542 256H572M572 211V256M612 211V256M572 226H640M572 240H640M1044 226H1077M1044 240H1077M1040 211V256M1070 211V256" stroke="#0a7a1e" />
    <path d="M572 631H1077" stroke="#0a7a1e" />
    {leftAxes.map(([, y]) => <path key={y} d={`M530 ${y}H572`} stroke="#0a7a1e" />)}
    {ticks.map(x => <path key={x} d={`M${x} 612V631`} stroke="#0a7a1e" />)}
    {hLines.map(([y, c]) => <path key={y} d={`M572 ${y}H1077`} stroke={c} />)}
    <path d="M572 256V644" stroke="#8b0000" strokeWidth="1.500" />
    <path d="M612 256V644M1057 256V612M1069 256V612" stroke="#f00" />
    <path d="M612 338V408M612 338H624M612 408H624" stroke="#777" strokeWidth="1" />
    <path d="M612 366H624" stroke="#0f6" strokeWidth="2" />
    <path d="M612 410H618V413H624" stroke="#22c" strokeWidth="1.500" />
    <path d="M611 335V341M611 405V411" stroke="#a0f" strokeWidth="2" />
    <path d="M1044 287H1077M1044 354H1077M1044 383H1056" stroke="#0e5" strokeWidth="2" />
    <path d="M1058 338H1077" stroke="#ee2" strokeWidth="2" />
    <path d="M1057 354V360H1074V354M1056 383V408M1044 408H1056M1044 402H1056" stroke="#c0c" strokeWidth="2" />
    <path d="M1058 383V408H1077M1044 324H1062" stroke="#f99" strokeWidth="2" />
    <path d="M1057 355V382" stroke="#0a5" strokeWidth="2" />
    <path d="M1044 485H1077" stroke="#0c3" strokeWidth="2" />
    <path d="M1072 488V477H1077" stroke="#ee2" strokeWidth="2" />
    <path d="M1044 469H1077M1044 287H1058" stroke="#a0a" strokeWidth="1.500" />
    {leftAxes.map(([t, y, x]) => (
      <g key={t}>
        <Hex x={x} y={y} />
        <Wt x={x} y={y + 6} textAnchor="middle">{t}</Wt>
      </g>
    ))}
    <Hex x={573} y={197} /><Wt x={573} y={203} textAnchor="middle">2-1</Wt>
    <Hex x={612} y={197} /><Wt x={612} y={203} textAnchor="middle">1-1</Wt>
    <Hex x={1040} y={197} /><Wt x={1041} y={203}>36</Wt>
    <Hex x={1075} y={197} /><Wt x={1068} y={203}>1-</Wt>
    <Wt x="573" y="239">3650</Wt><Wt x="600" y="239">1040</Wt>
    <Wt x="1043" y="239">0</Wt><Wt x="1046" y="239">3700</Wt>
    {vDims.map(([y, t]) => <Wt key={y} transform={`translate(556 ${y}) rotate(-90)`} textAnchor="middle">{t}</Wt>)}
    <Wt transform="translate(540 435) rotate(-90)" textAnchor="middle">33800</Wt>
    <Wt transform="translate(556 587) rotate(-90)" textAnchor="middle">10200</Wt>
    {btm.map(([x, t]) => <Wt key={x} x={x} y={643}>{t}</Wt>)}
    <Wt x="911" y="638">260</Wt>
    <text x="531" y="618" fill="#0d0" fontFamily="Liberation Sans" fontSize="14">Y</text>
    <path d="M537 619l6 11h-4v14h-4v-14h-4z" fill="#0f4" />
  </svg>
);

export default function App() {
  return (
    <>
      <GlobalStyle />
      <Frame>
        <Header>
          <LogoCell>
            <svg width="29" height="28" viewBox="0 0 29 28">
              <defs><linearGradient id="lg" x1="0" y1="0" x2="0" y2="1"><stop offset="0" stopColor="#e6f6fd" /><stop offset="1" stopColor="#a9e0fb" /></linearGradient></defs>
              <rect width="29" height="28" rx="6" fill="url(#lg)" />
              <path d="M6 6h17a2.500 2.500 0 010 6h-5v9a3.500 3.500 0 01-7 0v-9H6a3 3 0 010-6z" fill="#1ea5f2" />
            </svg>
          </LogoCell>
          <HeaderMain>
            <QuickBar>
              {quick.map(([n, w, dd], i) => (
                <QuickSlot key={i} $w={w} $gap={i === 4 ? 6 : i === 5 ? 8 : 7}>
                  <Svg n={n} />
                  {dd ? <MiniCaret $c={i === 5 ? '#ccc' : '#555'} /> : null}
                </QuickSlot>
              ))}
              <MiniCaret $c="#888" />
              <WinTitle>广联达BIM土建计量平台 GTJ2021 - [E:\GTJ\凤城庭院-11#楼.GTJ]</WinTitle>
            </QuickBar>
            <TabRow>
              {tabs.map(t => <Tab key={t} $on={t === '建模'}>{t}</Tab>)}
              <AskBox>答疑解惑，搜这里</AskBox>
            </TabRow>
          </HeaderMain>
        </Header>
        <Ribbon>
          {groups.map(g => (
            <RGroup key={g.label} $w={g.w} $pl={g.pl}>
              <RGrid $cols={g.cols}>
                {g.items.map((it, i) => it.i ? (
                  <Tool key={i} $off={it.off} $on={it.on}>
                    <Svg n={it.i} />
                    {it.t}
                    {it.c ? <MiniCaret $c={it.off ? '#bbb' : '#666'} style={{ marginLeft: 3 }} /> : null}
                  </Tool>
                ) : <span key={i} />)}
              </RGrid>
              <RLabel $pl={g.pl} $shift={g.shift}>{g.label}<MiniCaret /></RLabel>
            </RGroup>
          ))}
        </Ribbon>
        <ComboRow>
          <Combo $w={94}><ClipText $indent={-5}>凤城庭院-11#楼</ClipText><MiniCaret /></Combo>
          <Combo $w={100}><ClipText>第11层</ClipText><MiniCaret /></Combo>
          <Combo $w={99}><ClipText>柱</ClipText><MiniCaret /></Combo>
          <Combo $w={99}><ClipText>柱</ClipText><MiniCaret /></Combo>
          <Combo $w={99}><ClipText>GJZ1</ClipText><MiniCaret /></Combo>
        </ComboRow>
        <Work>
          <Nav>
            <PanelStrip>✕</PanelStrip>
            <NavTitle>导航树</NavTitle>
            <NavTools>
              <svg width="14" height="12" viewBox="0 0 14 12" style={{ marginRight: 'auto' }}>
                <path d="M-3 8h8M1 4.500v7M7 3.500h6M10 .5v6" stroke="#1e88d8" strokeWidth="2" />
              </svg>
              <NavBtn><Svg n="list" /></NavBtn>
              <NavBtn><Svg n="panel" /></NavBtn>
            </NavTools>
            <NavTree>
              <Thumb $l={191} $t={16} $h={306} />
              {navData.map(g => (
                <React.Fragment key={g.t}>
                  <NavRow>
                    <svg width="12" height="14" viewBox="0 0 12 14" style={{ flex: 'none' }}>
                      {g.open
                        ? <><path d="M0 2h4l1.500 2H12v2H0z" fill="#fbcd7e" /><path d="M0 6h12l-1 8H0z" fill="#fde3ad" /><path d="M0 9.500h6" stroke="#f3b657" strokeWidth="2" /></>
                        : <><path d="M0 1h6l1.500 2H12v10H0z" fill="#fbcd7e" /><path d="M0 8h6M3 5v6" stroke="#fff3d8" strokeWidth="2" /></>}
                    </svg>
                    {g.t}
                    {g.vip ? <Vip>VIP</Vip> : null}
                  </NavRow>
                  {g.kids?.map(([ic, t, on]) => (
                    <NavChild key={t}><NavItem $on={on}><Svg n={ic} />{t}</NavItem></NavChild>
                  ))}
                </React.Fragment>
              ))}
            </NavTree>
          </Nav>
          <Mid>
            <Panel $h={196}>
              <PanelStrip>✕</PanelStrip>
              <TabsBar><PTab $on>构件列表</PTab><PTab>图纸管理</PTab></TabsBar>
              <PTools>
                <PTool $m={4}><Svg n="add" w={15} h={15} />新建<MiniCaret style={{ marginLeft: 2 }} /></PTool>
                <PTool $m={11} $ml={5}><Svg n="copyDoc" w={14} h={14} />复制</PTool>
                <PTool $m={12}><Svg n="delDoc" w={14} h={14} />删除</PTool>
                <PTool $m={19}><Svg n="layerCopy" w={15} h={15} />层间复制</PTool>
                <Svg n="fw" w={9} h={9} />
              </PTools>
              <SearchRow>搜索构件...<Svg n="search" w={12} h={12} /></SearchRow>
              <CompTree>
                <Thumb $l={263} $t={17} $h={15} />
                <TreeRow $pad={11}><Tri />柱</TreeRow>
                <TreeRow $pad={31}><Tri />框架柱</TreeRow>
                <TreeRow $pad={63}><Picked>GJZ1</Picked></TreeRow>
                <TreeRow $pad={63}>GYZ2</TreeRow>
                <TreeRow $pad={63}>GYZ1</TreeRow>
              </CompTree>
            </Panel>
            <Panel>
              <PanelStrip>✕</PanelStrip>
              <TabsBar><PTab $on>属性列表</PTab><PTab>图层管理</PTab></TabsBar>
              <PropHead>
                <HeadCell /><HeadCell>属性名称</HeadCell><HeadCell>属性值</HeadCell><HeadCell>附加</HeadCell>
              </PropHead>
              {props.map(p => (
                <PropRow key={p.n}>
                  <NumCell>{p.n}</NumCell>
                  <NameCell $blue={p.blue}>{p.exp ? <Expand>+</Expand> : null}{p.name}</NameCell>
                  <ValCell $grey={p.grey}>{p.val}</ValCell>
                  <AddCell>{p.box ? <TableBox /> : null}</AddCell>
                </PropRow>
              ))}
              <Thumb $l={264} $t={163} $h={130} />
            </Panel>
          </Mid>
          <Split><Handle /></Split>
          <Cad><CadDrawing /></Cad>
        </Work>

        <Dialog>
          <DlgHead>
            批量选择
            <svg width="12" height="12" viewBox="0 0 12 12"><path d="M2 2l8 8M10 2l-8 8" stroke="#fff" strokeWidth="1.500" /></svg>
          </DlgHead>
          <DlgTree>
            <Thumb $l={382} $t={14} $h={126} />
            <DRow $lv={0}><DTri /><DLabel><Mark s="mix" />凤城庭院-11#楼</DLabel></DRow>
            <DRow $lv={1}><DTri /><DLabel><Mark s="mix" />第11层</DLabel></DRow>
            <DRow $lv={2}><DTri /><DLabel $hl><Mark s="on" />柱</DLabel></DRow>
            <DRow $lv={3}><DTri /><DLabel><Mark s="on" />框架柱</DLabel></DRow>
            {members.map((m, i) => (
              <DRow key={i} $lv={4}><DTri $hide /><DLabel><Mark s="on" />{m}</DLabel></DRow>
            ))}
          </DlgTree>
          <Opts>
            <Opt><Mark s="on" />当前单项工程</Opt>
            <Opt><Mark s="on" />当前楼层</Opt>
            <Opt><Mark s="off" />当前构件类型</Opt>
            <Opt><Mark s="on" />显示构件</Opt>
          </Opts>
          <Rule />
          <Btns><Btn $pri>确定</Btn><Btn>取消</Btn></Btns>
        </Dialog>

        <Overlay width="1077" height="644" viewBox="0 0 1077 644">
          <rect x="12.500" y="87.500" width="65" height="28" fill="none" stroke="#ff1c24" strokeWidth="3" />
          <rect x="684.500" y="194.500" width="110" height="37" fill="none" stroke="#ff1c24" strokeWidth="3" />
          <polygon points="110,102 128,95 127,100 420,169 420,176 126,110 127,114" fill="#ff1c24" />
          <polygon points="340,154 668,201 669,197 683,206 664,214 666,209 340,162" fill="#ff1c24" />
          <polygon points="128,127 325,136 325,137 128,128" fill="#ff3b40" />
          <polygon points="800,283 801,283 890,526 896,523 893,546 882,528 886,527" fill="#ff1c24" />
        </Overlay>
      </Frame>
    </>
  );
}
